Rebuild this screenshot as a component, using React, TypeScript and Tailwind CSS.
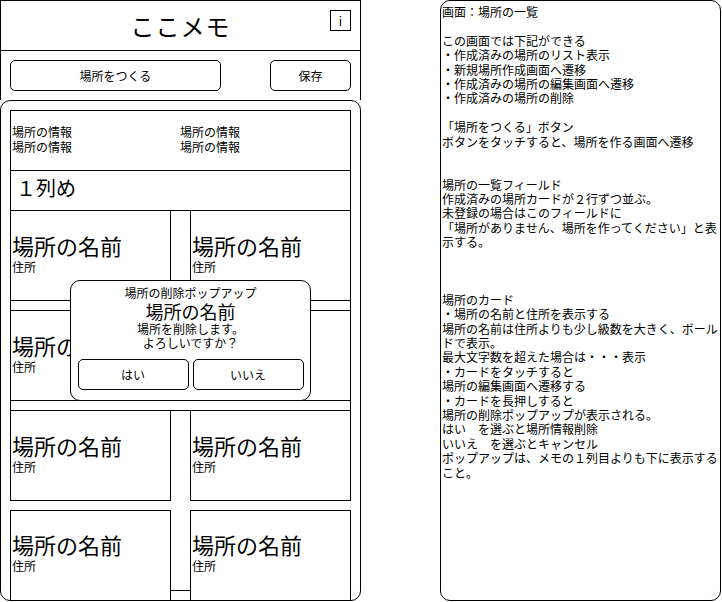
const font = { fontFamily: '"Noto Sans CJK JP", "Noto Sans", sans-serif' };

const notes = [
  "画面：場所の一覧",
  "",
  "この画面では下記ができる",
  "・作成済みの場所のリスト表示",
  "・新規場所作成画面へ遷移",
  "・作成済みの場所の編集画面へ遷移",
  "・作成済みの場所の削除",
  "",
  "「場所をつくる」ボタン",
  "ボタンをタッチすると、場所を作る画面へ遷移",
  "",
  "",
  "場所の一覧フィールド",
  "作成済みの場所カードが２行ずつ並ぶ。",
  "未登録の場合はこのフィールドに",
  "「場所がありません、場所を作ってください」と表",
  "示する。",
  "",
  "",
  "",
  "場所のカード",
  "・場所の名前と住所を表示する",
  "場所の名前は住所よりも少し級数を大きく、ボール",
  "ドで表示。",
  "最大文字数を超えた場合は・・・表示",
  "・カードをタッチすると",
  "場所の編集画面へ遷移する",
  "・カードを長押しすると",
  "場所の削除ポップアップが表示される。",
  "はい　を選ぶと場所情報削除",
  "いいえ　を選ぶとキャンセル",
  "ポップアップは、メモの１列目よりも下に表示する",
  "こと。",
];

function Card({ className = "" }: { className?: string }) {
  return (
    <div className={`flex flex-col justify-center border-black pl-[1px] ${className}`}>
      <div className="text-[22px] leading-[27px] text-black">場所の名前</div>
      <div className="text-[12px] leading-[15px] text-black">住所</div>
    </div>
  );
}

function CardRow({ last = false }: { last?: boolean }) {
  if (last) {
    return (
      <div className="grid h-[100px] shrink-0 grid-cols-[161px_19px_161px]">
        <Card className="border pb-[16px]" />
        <div className="mt-[80px] border-t border-black" />
        <Card className="border pb-[16px]" />
      </div>
    );
  }
  return (
    <div className="grid h-[90px] shrink-0 grid-cols-[161px_19px_161px]">
      <Card className="border-x border-b pb-[5px]" />
      <div />
      <Card className="border-x border-b pb-[5px]" />
    </div>
  );
}

function PhoneScreen() {
  return (
    <div className="relative flex h-[601px] w-[361px] flex-col">
      {/* header */}
      <div className="relative flex h-[51px] shrink-0 items-center justify-center border border-black">
        <span className="text-[24px] leading-none tracking-[1px] text-black">ここメモ</span>
        <div className="absolute left-[329px] top-[9px] flex h-[21px] w-[21px] items-center justify-center border border-black text-[12px] leading-none">
          i
        </div>
      </div>

      {/* buttons */}
      <div className="flex h-[49px] shrink-0 items-start border-x border-black pl-[9px] pt-[9px]">
        <button className="flex h-[31px] w-[211px] items-center justify-center rounded-[5px] border border-black text-[12px] text-black">
          場所をつくる
        </button>
        <button className="ml-[49px] flex h-[31px] w-[81px] items-center justify-center rounded-[5px] border border-black text-[12px] text-black">
          保存
        </button>
      </div>

      {/* list panel */}
      <div className="flex min-h-0 flex-1 flex-col overflow-hidden rounded-[10px] border border-black px-[9px] pt-[9px]">
        <div className="grid h-[61px] shrink-0 grid-cols-[168px_1fr] content-center border border-black pl-[1px] pb-[4px] text-[12px] leading-[15px] text-black">
          <div>
            <div>場所の情報</div>
            <div>場所の情報</div>
          </div>
          <div>
            <div>場所の情報</div>
            <div>場所の情報</div>
          </div>
        </div>
        <div className="flex h-[40px] shrink-0 items-center border-x border-b border-black pl-[5px] pb-[5px] text-[20px] leading-none text-black">
          １列め
        </div>

        <CardRow />
        <div className="h-[10px] shrink-0 border-x border-b border-black" />
        <CardRow />
        <div className="h-[10px] shrink-0 border-x border-b border-black" />
        <CardRow />
        <div className="h-[9px] shrink-0" />
        <CardRow last />
      </div>

      {/* delete popup */}
      <div className="absolute left-[70px] top-[280px] flex h-[121px] w-[241px] flex-col items-center rounded-[10px] border border-black bg-white pt-[4px] text-black">
        <div className="text-[12px] leading-[16px]">場所の削除ポップアップ</div>
        <div className="text-[18px] leading-[20px]">場所の名前</div>
        <div className="text-[12px] leading-[15px]">場所を削除します。</div>
        <div className="text-[12px] leading-[14px]">よろしいですか？</div>
        <div className="mt-[9px] flex gap-[4px]">
          <button className="flex h-[31px] w-[111px] items-center justify-center rounded-[5px] border border-black text-[12px]">
            はい
          </button>
          <button className="flex h-[31px] w-[111px] items-center justify-center rounded-[5px] border border-black text-[12px]">
            いいえ
          </button>
        </div>
      </div>
    </div>
  );
}

export default function App() {
  return (
    <div className="flex h-[602px] w-[722px] bg-white" style={font}>
      <PhoneScreen />
      <div className="ml-[79px] h-[601px] w-[281px] rounded-[10px] border border-black pl-[1px] pt-[4px] text-[12px] leading-[14.4px] text-black">
        {notes.map((line, i) => (
          <div key={i} className="h-[14.4px] whitespace-pre">
            {line || " "}
          </div>
        ))}
      </div>
    </div>
  );
}
